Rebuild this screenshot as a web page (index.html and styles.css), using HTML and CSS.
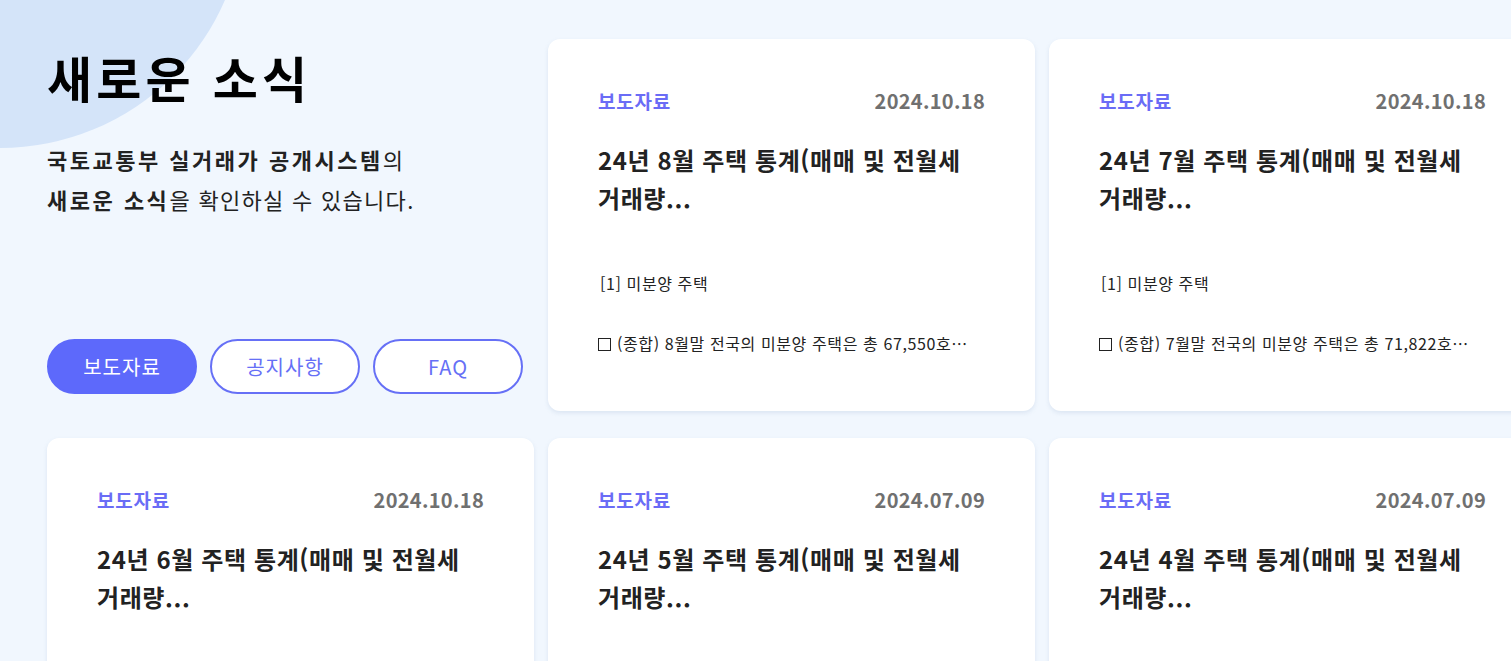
FILE: index.html
```html
<!DOCTYPE html>
<html lang="ko">
<head>
<meta charset="utf-8">
<title>새로운 소식</title>
<link rel="stylesheet" href="styles.css">
</head>
<body>
<div class="page">
  <div class="bg-circle"></div>
  <div class="grid">
    <section class="intro">
      <h1 class="intro-title">새로운 소식</h1>
      <p class="intro-desc"><strong>국토교통부 실거래가 공개시스템</strong>의<br><strong>새로운 소식</strong>을 확인하실 수 있습니다.</p>
      <div class="tabs">
        <button class="tab tab-active">보도자료</button>
        <button class="tab">공지사항</button>
        <button class="tab">FAQ</button>
      </div>
    </section>

    <article class="card">
      <div class="card-head"><span class="card-cat">보도자료</span><span class="card-date">2024.10.18</span></div>
      <h2 class="card-title">24년 8월 주택 통계(매매 및 전월세 거래량...</h2>
      <p class="card-line card-line-first">[1] 미분양 주택</p>
      <p class="card-line card-line-second"><span class="sq"></span>(종합) 8월말 전국의 미분양 주택은 총 67,550호…</p>
    </article>

    <article class="card">
      <div class="card-head"><span class="card-cat">보도자료</span><span class="card-date">2024.10.18</span></div>
      <h2 class="card-title">24년 7월 주택 통계(매매 및 전월세 거래량...</h2>
      <p class="card-line card-line-first">[1] 미분양 주택</p>
      <p class="card-line card-line-second"><span class="sq"></span>(종합) 7월말 전국의 미분양 주택은 총 71,822호…</p>
    </article>

    <article class="card">
      <div class="card-head"><span class="card-cat">보도자료</span><span class="card-date">2024.10.18</span></div>
      <h2 class="card-title">24년 6월 주택 통계(매매 및 전월세 거래량...</h2>
      <p class="card-line card-line-first">[1] 미분양 주택</p>
      <p class="card-line card-line-second"><span class="sq"></span>(종합) 6월말 전국의 미분양 주택은 총 74,037호…</p>
    </article>

    <article class="card">
      <div class="card-head"><span class="card-cat">보도자료</span><span class="card-date">2024.07.09</span></div>
      <h2 class="card-title">24년 5월 주택 통계(매매 및 전월세 거래량...</h2>
      <p class="card-line card-line-first">[1] 미분양 주택</p>
      <p class="card-line card-line-second"><span class="sq"></span>(종합) 5월말 전국의 미분양 주택은 총 72,129호…</p>
    </article>

    <article class="card">
      <div class="card-head"><span class="card-cat">보도자료</span><span class="card-date">2024.07.09</span></div>
      <h2 class="card-title">24년 4월 주택 통계(매매 및 전월세 거래량...</h2>
      <p class="card-line card-line-first">[1] 미분양 주택</p>
      <p class="card-line card-line-second"><span class="sq"></span>(종합) 4월말 전국의 미분양 주택은 총 71,997호…</p>
    </article>
  </div>
</div>
</body>
</html>
```

FILE: styles.css
```css
html, body {
  margin: 0;
  padding: 0;
}

body {
  background: #f1f7fe;
  font-family: "Noto Sans CJK KR", "Noto Sans", sans-serif;
  color: #222;
  overflow: hidden;
  width: 1511px;
  height: 661px;
}

.page {
  position: relative;
  width: 1511px;
  height: 661px;
  overflow: hidden;
}

.bg-circle {
  position: absolute;
  left: -245px;
  top: -342px;
  width: 490px;
  height: 490px;
  border-radius: 50%;
  background: #d4e4f9;
}

.grid {
  position: relative;
  display: grid;
  grid-template-columns: repeat(3, 487px);
  grid-auto-rows: 372px;
  column-gap: 14px;
  row-gap: 27px;
  padding: 39px 0 0 47px;
}

.intro {
  display: flex;
  flex-direction: column;
  padding-bottom: 17px;
}

.intro-title {
  margin: 6px 0 0;
  font-size: 49px;
  line-height: 64px;
  font-weight: 700;
  color: #000;
  letter-spacing: 4.2px;
}

.intro-desc {
  margin: 30px 0 0;
  font-size: 22px;
  line-height: 40px;
  color: #222;
  font-weight: 400;
  letter-spacing: 1.3px;
}

.intro-desc strong {
  font-weight: 700;
  letter-spacing: 2.5px;
}

.tabs {
  margin-top: auto;
  display: flex;
  gap: 13px;
}

.tab {
  width: 150px;
  height: 55px;
  border-radius: 28px;
  border: 2px solid #6670f6;
  background: #fff;
  color: #6670f6;
  font-family: "Noto Sans CJK KR", "Noto Sans", sans-serif;
  font-size: 20px;
  font-weight: 400;
  letter-spacing: 1px;
  padding: 0;
}

.tab-active {
  background: #5d69fb;
  border-color: #5d69fb;
  color: #fff;
}

.card {
  background: #fff;
  border-radius: 12px;
  box-shadow: 0 2px 4px rgba(120, 150, 190, 0.18);
  padding: 48px 50px 0;
  min-width: 0;
}

.card-head {
  display: flex;
  justify-content: space-between;
  align-items: center;
  height: 26px;
}

.card-cat {
  font-size: 19px;
  font-weight: 700;
  color: #6a6cf6;
  letter-spacing: 0.8px;
}

.card-date {
  font-size: 20px;
  font-weight: 700;
  color: #707070;
  letter-spacing: 0.3px;
}

.card-title {
  margin: 28px 0 0;
  font-size: 24px;
  line-height: 38px;
  font-weight: 700;
  color: #222;
  height: 76px;
  overflow: hidden;
  letter-spacing: 0.6px;
  word-break: keep-all;
}

.card-line {
  margin: 0;
  font-size: 16px;
  line-height: 26px;
  color: #222;
  white-space: nowrap;
  letter-spacing: 0.6px;
}

.card-line-first {
  margin-top: 53px;
  padding-left: 2px;
}

.card-line-second {
  margin-top: 34px;
}

.sq {
  display: inline-block;
  width: 13px;
  height: 13px;
  border: 1.5px solid #222;
  box-sizing: border-box;
  margin-right: 6px;
  vertical-align: -1px;
}
```
